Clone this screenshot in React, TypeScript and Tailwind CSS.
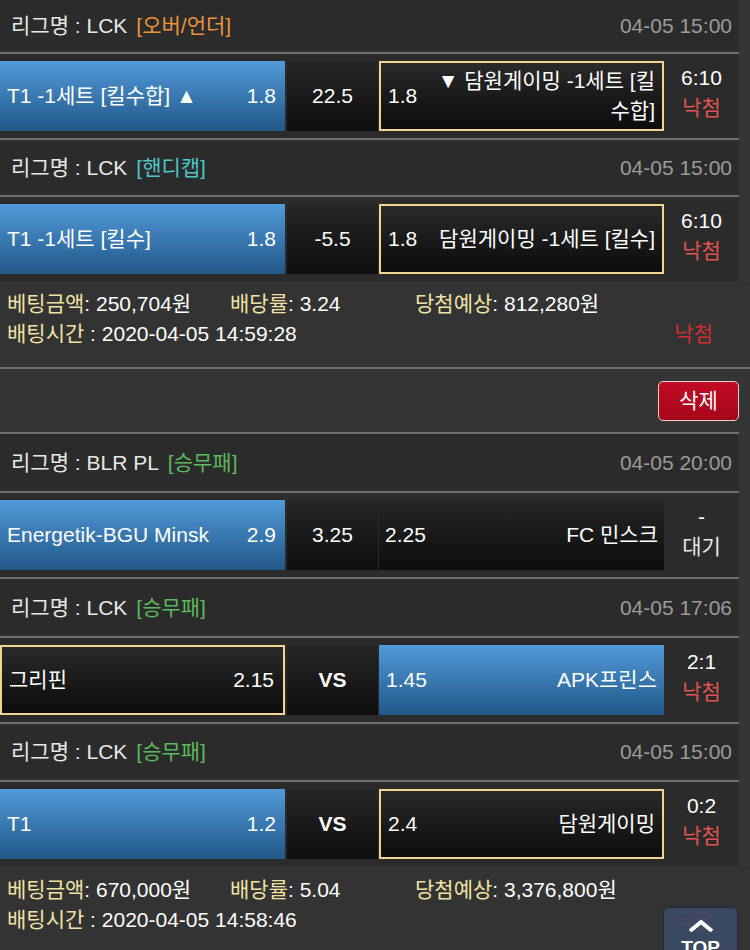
import React from 'react';

type Side = {
  name: string;
  odd: string;
  kind: 'blue' | 'pick' | 'dark';
};

type Game = {
  league: string;
  tag: string;
  tagColor: string;
  date: string;
  left: Side;
  mid: string;
  vs?: boolean;
  right: Side;
  score: string;
  result: string;
  resultColor: string;
  headerHeight: string;
};

const games: Game[] = [
  {
    league: 'LCK',
    tag: '[오버/언더]',
    tagColor: 'text-[#e8953c]',
    date: '04-05 15:00',
    left: { name: 'T1 -1세트 [킬수합] ▲', odd: '1.8', kind: 'blue' },
    mid: '22.5',
    right: { name: '▼ 담원게이밍 -1세트 [킬수합]', odd: '1.8', kind: 'pick' },
    score: '6:10',
    result: '낙첨',
    resultColor: 'text-[#e0534f]',
    headerHeight: 'h-[54px]',
  },
  {
    league: 'LCK',
    tag: '[핸디캡]',
    tagColor: 'text-[#4cc6c6]',
    date: '04-05 15:00',
    left: { name: 'T1 -1세트 [킬수]', odd: '1.8', kind: 'blue' },
    mid: '-5.5',
    right: { name: '담원게이밍 -1세트 [킬수]', odd: '1.8', kind: 'pick' },
    score: '6:10',
    result: '낙첨',
    resultColor: 'text-[#e0534f]',
    headerHeight: 'h-[57px]',
  },
];

const games2: Game[] = [
  {
    league: 'BLR PL',
    tag: '[승무패]',
    tagColor: 'text-[#5cb85c]',
    date: '04-05 20:00',
    left: { name: 'Energetik-BGU Minsk', odd: '2.9', kind: 'blue' },
    mid: '3.25',
    right: { name: 'FC 민스크', odd: '2.25', kind: 'dark' },
    score: '-',
    result: '대기',
    resultColor: 'text-[#e6e6e6]',
    headerHeight: 'h-[59px]',
  },
  {
    league: 'LCK',
    tag: '[승무패]',
    tagColor: 'text-[#5cb85c]',
    date: '04-05 17:06',
    left: { name: '그리핀', odd: '2.15', kind: 'pick' },
    mid: 'VS',
    vs: true,
    right: { name: 'APK프린스', odd: '1.45', kind: 'blue' },
    score: '2:1',
    result: '낙첨',
    resultColor: 'text-[#e0534f]',
    headerHeight: 'h-[59px]',
  },
  {
    league: 'LCK',
    tag: '[승무패]',
    tagColor: 'text-[#5cb85c]',
    date: '04-05 15:00',
    left: { name: 'T1', odd: '1.2', kind: 'blue' },
    mid: 'VS',
    vs: true,
    right: { name: '담원게이밍', odd: '2.4', kind: 'pick' },
    score: '0:2',
    result: '낙첨',
    resultColor: 'text-[#e0534f]',
    headerHeight: 'h-[58px]',
  },
];

const boxStyle = {
  blue: 'bg-linear-to-b from-[#529ad9] to-[#215889] px-[7px]',
  pick: 'bg-linear-to-b from-[#2a2a2a] to-[#0c0c0c] border-2 border-[#f1d48e] px-[7px]',
  dark: 'bg-linear-to-b from-[#262626] to-[#0d0d0d] px-[6px]',
};

const Box = ({ side, reverse }: { side: Side; reverse?: boolean }) => (
  <div className={`w-[285px] h-[70px] flex items-center ${boxStyle[side.kind]}`}>
    {reverse ? (
      <>
        <span className="shrink-0 mr-[20px]">{side.odd}</span>
        <span className="flex-1 text-right">{side.name}</span>
      </>
    ) : (
      <>
        <span className="flex-1">{side.name}</span>
        <span className="shrink-0 ml-[10px] pr-[2px]">{side.odd}</span>
      </>
    )}
  </div>
);

const GameBlock = ({ game, first }: { game: Game; first?: boolean }) => (
  <div className={`w-[739px] bg-[#2b2b2b] ${first ? '' : 'border-t-2 border-[#6e6e6e]'}`}>
    <div className={`${game.headerHeight} flex items-center justify-between pl-[11px] pr-[7px] border-b-2 border-[#6e6e6e]`}>
      <div className="text-[#e8e8e8]">
        리그명 : {game.league}
        <span className={`ml-[9px] ${game.tagColor}`}>{game.tag}</span>
      </div>
      <div className="text-[#9b9b9b]">{game.date}</div>
    </div>
    <div className="flex py-[7px]">
      <div className="w-[286px] mr-[1px] shrink-0">
        <Box side={game.left} />
      </div>
      <div
        className={`w-[91px] h-[70px] mr-[1px] shrink-0 flex items-center justify-center bg-linear-to-b from-[#262626] to-[#0e0e0e] ${game.vs ? 'font-bold' : ''}`}
      >
        {game.mid}
      </div>
      <div className="shrink-0">
        <Box side={game.right} reverse />
      </div>
      <div className="flex-1 flex flex-col items-center justify-center pb-[6px]">
        <span className="text-white">{game.score}</span>
        <span className={game.resultColor}>{game.result}</span>
      </div>
    </div>
  </div>
);

const Summary = ({
  amount,
  rate,
  win,
  time,
}: {
  amount: string;
  rate: string;
  win: string;
  time: string;
}) => (
  <div className="px-[7px]">
    <div className="flex">
      <div className="w-[223px]">
        <span className="text-[#efe2a3]">베팅금액</span>: {amount}
      </div>
      <div className="w-[185px]">
        <span className="text-[#efe2a3]">배당률</span>: {rate}
      </div>
      <div>
        <span className="text-[#efe2a3]">당첨예상</span>: {win}
      </div>
    </div>
    <div className="flex justify-between pr-[30px]">
      <div>
        <span className="text-[#efe2a3]">배팅시간</span> : {time}
      </div>
      <span className="text-[#cf2f31]">낙첨</span>
    </div>
  </div>
);

export default function App() {
  return (
    <div
      className="relative w-[750px] min-h-[950px] bg-[#353535] text-white text-[21px] leading-[30px] overflow-hidden"
      style={{ fontFamily: '"Liberation Sans", "Noto Sans CJK KR", sans-serif' }}
    >
      {games.map((g, i) => (
        <GameBlock key={i} game={g} first={i === 0} />
      ))}

      <div className="bg-[#333333] h-[88px] pt-[8px] border-b-2 border-[#6e6e6e]">
        <Summary amount="250,704원" rate="3.24" win="812,280원" time="2020-04-05 14:59:28" />
      </div>

      <div className="h-[63px] flex items-center justify-end pr-[11px]">
        <button className="w-[81px] h-[40px] rounded-[5px] border border-[#e9cdcd] bg-linear-to-b from-[#c20b24] to-[#a5061b] text-white">
          삭제
        </button>
      </div>

      {games2.map((g, i) => (
        <GameBlock key={i} game={g} />
      ))}

      <div className="bg-[#333333] pt-[9px] pb-[20px]">
        <Summary amount="670,000원" rate="5.04" win="3,376,800원" time="2020-04-05 14:58:46" />
      </div>

      {/* floating top button */}
      <div className="absolute left-[663px] top-[907px] w-[75px] h-[60px] rounded-t-[6px] border border-[#1f2838] bg-[#3b4a66]/90 flex flex-col items-center pt-[12px]">
        <svg width="26" height="12" viewBox="0 0 26 12">
          <path d="M2 11 L13 2 L24 11" fill="none" stroke="#ffffff" strokeWidth="4" strokeLinejoin="miter" />
        </svg>
        <span className="text-[19px] font-bold leading-[20px] mt-[6px] text-white">TOP</span>
      </div>
    </div>
  );
}
